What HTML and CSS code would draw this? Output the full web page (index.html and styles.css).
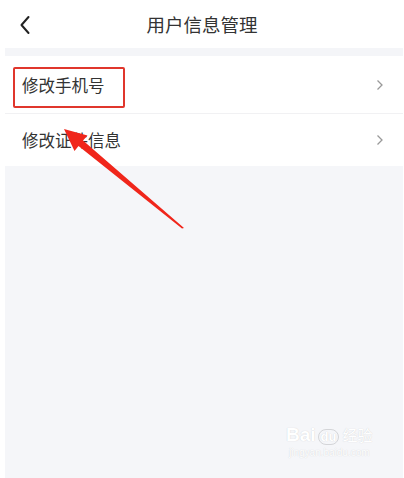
FILE: index.html
```html
<!DOCTYPE html>
<html lang="zh-CN">
<head>
<meta charset="UTF-8" />
<title>用户信息管理</title>
<meta name="viewport" content="width=device-width, initial-scale=1.0" />
<link rel="stylesheet" href="styles.css">
</head>
<body>
<div class="page">
    <div class="header">
        <span class="back">
            <svg width="12" height="20" viewBox="0 0 12 20"><path d="M9.5 2 L2.5 10 L9.5 18" fill="none" stroke="#222" stroke-width="2" stroke-linecap="round" stroke-linejoin="round"/></svg>
        </span>
        <span class="title">用户信息管理</span>
        <span></span>
    </div>
    <div class="main">
        <div class="sep"></div>
        <div class="list">
            <div class="row row-first">
                <span class="label">修改手机号</span>
                <svg class="arrow-right" width="8" height="12" viewBox="0 0 8 12"><path d="M1.5 1.5 L6 6 L1.5 10.5" fill="none" stroke="#999" stroke-width="1.3"/></svg>
            </div>
            <div class="row">
                <span class="label">修改证件信息</span>
                <svg class="arrow-right" width="8" height="12" viewBox="0 0 8 12"><path d="M1.5 1.5 L6 6 L1.5 10.5" fill="none" stroke="#999" stroke-width="1.3"/></svg>
            </div>
        </div>
        <div class="rest"></div>
    </div>

    <!-- 标注 -->
    <div class="mark-box"></div>
    <svg class="mark-arrow" width="404" height="478" viewBox="0 0 404 478">
        <polygon points="64,129 87.5,135.5 83,140.5 184,228 182,228.5 78.5,146 74.5,151" fill="#f0261b"/>
    </svg>

    <div class="watermark">
        <div class="wm-logo">Bai<span class="wm-du">du</span><span class="wm-cn">经验</span></div>
        <div class="wm-url">jingyan.baidu.com</div>
    </div>
</div>
</body>
</html>
```

FILE: styles.css
```css
body {
    margin: 0;
    background: #fff;
    font-family: "Noto Sans CJK SC", "Noto Sans", sans-serif;
    color: #333;
}
.page {
    position: relative;
    width: 404px;
    height: 478px;
    overflow: hidden;
}
.header {
    height: 48px;
    display: grid;
    grid-template-columns: 60px 1fr 60px;
    align-items: center;
}
.back {
    display: flex;
    padding-left: 19px;
    padding-top: 1px;
}
.title {
    text-align: center;
    font-size: 18.5px;
    color: #333;
}
.main {
    padding: 0 1px 0 5px;
}
.sep {
    height: 8px;
    background: #f4f5f8;
}
.list {
    background: #fff;
}
.row {
    height: 52px;
    display: flex;
    align-items: center;
    justify-content: space-between;
    padding: 0 19px 0 17px;
}
.row-first {
    height: 57px;
    border-bottom: 1px solid #f1f1f3;
}
.label {
    font-size: 16.5px;
    color: #333;
}
.arrow-right {
    display: block;
}
.rest {
    height: 312px;
    background: #f5f6f9;
}
.mark-box {
    position: absolute;
    left: 13px;
    top: 67px;
    width: 108px;
    height: 37px;
    border: 2px solid #e0362c;
    border-radius: 2px;
}
.mark-arrow {
    position: absolute;
    left: 0;
    top: 0;
}
.watermark {
    position: absolute;
    left: 286px;
    top: 424px;
    color: #fff;
    text-shadow: 0 0 1px #c8c9cc;
    font-family: "Liberation Sans", sans-serif;
}
.wm-logo {
    font-size: 19px;
    font-weight: bold;
    line-height: 22px;
}
.wm-du {
    display: inline-block;
    margin-left: 2px;
    padding: 0 2px;
    border: 1px solid #d4d5d8;
    border-radius: 8px;
    font-size: 13px;
    line-height: 14px;
}
.wm-cn {
    margin-left: 3px;
    font-size: 15px;
    font-family: "Noto Sans CJK SC", sans-serif;
    font-weight: normal;
}
.wm-url {
    font-size: 10px;
    line-height: 14px;
    margin-left: 3px;
}
```
